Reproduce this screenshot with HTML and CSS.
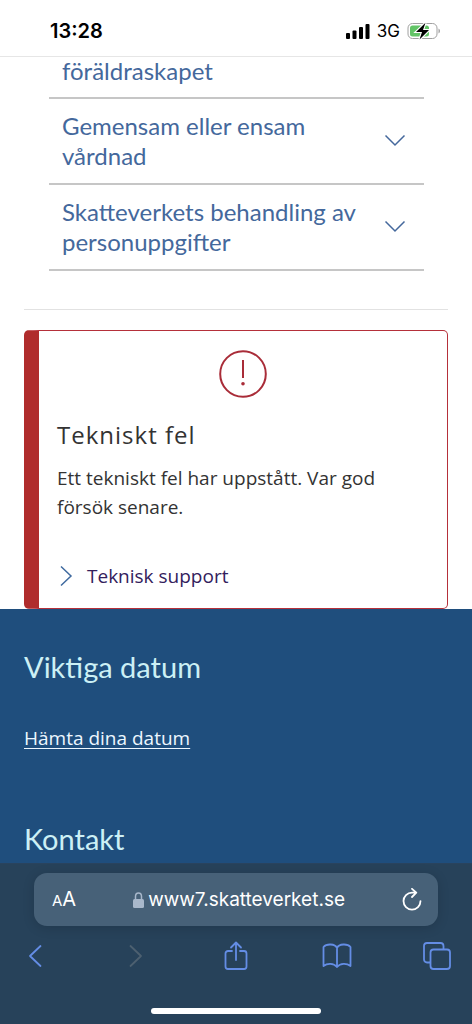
FILE: index.html
```html
<!DOCTYPE html>
<html lang="sv">
<head>
<meta charset="utf-8">
<meta name="viewport" content="width=device-width, initial-scale=1">
<title>Skatteverket</title>
<link rel="stylesheet" href="styles.css">
</head>
<body>
<header class="status">
  <time class="status-time">13:28</time>
  <div class="status-right">
    <svg class="signal" viewBox="0 0 24 16" width="24" height="16" aria-hidden="true"><rect x="0" y="10" width="4" height="6" rx="1"/><rect x="6.5" y="7.500" width="4" height="8.500" rx="1"/><rect x="13" y="4" width="4" height="12" rx="1"/><rect x="19.500" y="1" width="4" height="15" rx="1"/></svg>
    <span class="network">3G</span>
    <svg viewBox="0 0 34 18" width="34" height="18" aria-hidden="true">
      <rect x="1" y="1.500" width="29" height="15" rx="4.500" fill="none" stroke="#a0a0a0"/>
      <path d="M31.500 6.500v5c2-1 2-4 0-5z" fill="#a0a0a0"/>
      <rect x="3" y="3.500" width="19" height="11" rx="2.500" fill="#62c466"/>
      <path d="M18.500 .8 9 10h6l-2.500 7.500L22 8h-6z" fill="#000" stroke="#fff" stroke-width="2.200" paint-order="stroke"/>
    </svg>
  </div>
</header>
<main class="page">
  <div class="accordion">
    <button class="item item-first" type="button"><span>föräldraskapet</span></button>
    <button class="item" type="button"><span>Gemensam eller ensam vårdnad</span><svg class="chevron" viewBox="0 0 22 14" width="22" height="14" aria-hidden="true"><path d="M1.500 1.500 11 11 20.500 1.500"/></svg></button>
    <button class="item" type="button"><span>Skatteverkets behandling av personuppgifter</span><svg class="chevron" viewBox="0 0 22 14" width="22" height="14" aria-hidden="true"><path d="M1.500 1.500 11 11 20.500 1.500"/></svg></button>
  </div>
  <hr class="divider">
  <section class="alert">
    <svg class="alert-icon" viewBox="0 0 48 48" width="48" height="48" aria-hidden="true"><circle cx="24" cy="24" r="22.800"/><path d="M24 10v18"/><circle class="dot" cx="24" cy="33.800" r="1.800"/></svg>
    <h2 class="alert-title">Tekniskt fel</h2>
    <p class="alert-text">Ett tekniskt fel har uppstått. Var god försök senare.</p>
    <a class="support" href="#"><svg viewBox="0 0 14 22" width="14" height="22" aria-hidden="true"><path d="M2 1.500 12 11 2 20.500"/></svg>Teknisk support</a>
  </section>
  <footer class="footer">
    <h2 class="footer-title">Viktiga datum</h2>
    <a class="footer-link" href="#">Hämta dina datum</a>
    <h2 class="footer-title">Kontakt</h2>
  </footer>
</main>
<nav class="browser">
  <div class="address">
    <button class="text-size" type="button" aria-label="Textstorlek"><span class="small-a">A</span>A</button>
    <div class="url"><svg viewBox="0 0 11 16" width="11" height="16" aria-hidden="true"><rect y="7" width="11" height="9" rx="1.500" fill="#a9b8cb"/><path d="M2.500 8V4.500a3 3.500 0 0 1 6 0V8" fill="none" stroke="#a9b8cb" stroke-width="1.500"/></svg><span>www7.skatteverket.se</span></div>
    <button class="reload" type="button" aria-label="Ladda om"><svg viewBox="0 0 20 24" width="20" height="24" aria-hidden="true"><path d="M13 4.600H10a8.500 8.500 0 1 0 8.500 8.500M10 .8l4.300 3.900-4.300 4.300"/></svg></button>
  </div>
  <div class="tools">
    <button type="button" aria-label="Bakåt"><svg viewBox="0 0 14 24" width="14" height="24"><path d="M12.500 2 2 12l10.500 10"/></svg></button>
    <button class="muted" type="button" aria-label="Framåt"><svg viewBox="0 0 14 24" width="14" height="24"><path d="M1.500 2 12 12 1.500 22"/></svg></button>
    <button type="button" aria-label="Dela"><svg viewBox="0 0 24 30" width="24" height="30"><path d="M8 10H4a2.500 2.500 0 0 0-2.500 2.500v13A2.500 2.500 0 0 0 4 28h16a2.500 2.500 0 0 0 2.500-2.500v-13A2.500 2.500 0 0 0 20 10h-4M12 19V1.500M7 6.500l5-5 5 5"/></svg></button>
    <button type="button" aria-label="Bokmärken"><svg viewBox="0 0 30 26" width="30" height="26"><path d="M15 24V5C13 .5 4.500.5 1.500 4v19c4-3 10-3 13.500 1 3.500-4 9.500-4 13.500-1V4C25.500.5 17 .5 15 5"/></svg></button>
    <button type="button" aria-label="Flikar"><svg viewBox="0 0 28 28" width="28" height="28"><rect x="7.500" y="7.500" width="19.500" height="19.500" rx="3"/><path d="M7 20.500H4a3 3 0 0 1-3-3V4a3 3 0 0 1 3-3h13.500a3 3 0 0 1 3 3v3"/></svg></button>
  </div>
  <div class="home"></div>
</nav>
</body>
</html>
```
FILE: styles.css
```css
* { box-sizing: border-box; }
body {
  margin: 0;
  height: 100vh;
  display: flex;
  flex-direction: column;
  overflow: hidden;
  background: #fff;
  font-family: "Open Sans", sans-serif;
  color: #333;
}
button {
  margin: 0;
  padding: 0;
  border: 0;
  background: none;
  font: inherit;
  color: inherit;
  text-align: left;
}
svg { display: block; flex: none; }
h2, p { margin: 0; font-weight: 400; }

.status {
  flex: none;
  display: flex;
  justify-content: space-between;
  align-items: center;
  padding: 16px 31px 10px 50px;
  border-bottom: 1px solid #e6e6e6;
  color: #000;
  font-family: Inter, sans-serif;
}
.status-time { font-size: 20px; font-weight: 600; line-height: 30px; }
.status-right { display: flex; align-items: center; gap: 7px; }
.network { font-size: 17px; line-height: 30px; }

.page {
  flex: 1;
  min-height: 0;
  overflow: hidden;
  display: flex;
  flex-direction: column;
}
.accordion { margin: 0 48px 0 49px; flex: none; }
.item {
  display: flex;
  width: 100%;
  align-items: center;
  justify-content: space-between;
  gap: 16px;
  padding: 12px 18px 12px 13px;
  border-bottom: 2px solid #c6c6c6;
  font-family: Lato, sans-serif;
  font-size: 24px;
  line-height: 30px;
  color: #44689c;
}
.item-first { padding-top: 0; line-height: 28px; }
.chevron { fill: none; stroke: #44689c; stroke-width: 1.5; }
.divider {
  flex: none;
  width: auto;
  margin: 38px 24px 20px;
  border: 0;
  border-top: 1px solid #e2e2e2;
}
.alert {
  flex: none;
  display: flex;
  flex-direction: column;
  margin: 0 24px;
  padding: 19px 18px 18px 18px;
  border: 1px solid #b5303a;
  border-left: 15px solid #b02c2c;
  border-radius: 5px;
}
.alert-icon { align-self: center; fill: none; stroke: #a92c38; stroke-width: 2; }
.alert-icon .dot { fill: #a92c38; stroke: none; }
.alert-title { margin-top: 20px; font-size: 24px; line-height: 34px; letter-spacing: 1px; }
.alert-text { margin-top: 12px; font-size: 19px; line-height: 29px; }
.support {
  display: flex;
  align-items: center;
  gap: 14px;
  margin-top: 40px;
  padding-left: 2px;
  font-size: 19px;
  line-height: 28px;
  color: #33205c;
  text-decoration: none;
}
.support svg { fill: none; stroke: #3f6a9f; stroke-width: 1.5; }

.footer {
  flex: 1 0 auto;
  padding: 40px 24px 0;
  background: #1f4e7d;
}
.footer-title {
  font-family: Lato, sans-serif;
  font-size: 29px;
  line-height: 36px;
  color: #ccf0f5;
}
.footer-link {
  display: block;
  width: fit-content;
  margin: 38px 0 68px;
  font-size: 19px;
  line-height: 30px;
  color: #edf7ff;
  text-underline-offset: 3px;
}

.browser {
  flex: none;
  padding: 9px 0 10px;
  border-top: 1px solid #29435e;
  background: #27425a;
  color: #fff;
  font-family: Inter, sans-serif;
}
.address {
  display: flex;
  align-items: center;
  justify-content: space-between;
  height: 53px;
  margin: 0 34px;
  padding: 0 16px 0 18px;
  border-radius: 13px;
  background: #476178;
  box-shadow: 0 2px 12px rgba(0, 0, 0, 0.15);
}
.text-size { font-size: 20px; line-height: 28px; }
.small-a { font-size: 15px; }
.url { display: flex; align-items: center; gap: 4px; font-size: 19px; line-height: 28px; }
.reload svg { fill: none; stroke: #fff; stroke-width: 1.8; stroke-linecap: round; stroke-linejoin: round; }
.tools {
  display: flex;
  align-items: center;
  justify-content: space-between;
  height: 60px;
  padding: 0 20px;
}
.tools button { display: flex; justify-content: center; width: 30px; }
.tools svg { fill: none; stroke: #648de5; stroke-width: 1.8; stroke-linecap: round; stroke-linejoin: round; }
.tools .muted svg { stroke: #4d6070; }
.home {
  width: 36%;
  height: 6px;
  margin: 22px auto 0;
  border-radius: 3px;
  background: #fff;
}
```
